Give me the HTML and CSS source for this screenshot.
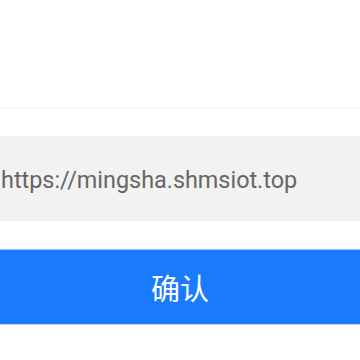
FILE: index.html
```html
<!DOCTYPE html>
<html lang="zh-CN">
<head>
    <meta charset="UTF-8">
    <meta name="viewport" content="width=device-width, initial-scale=1.0">
    <title>服务器地址</title>
    <link rel="stylesheet" href="styles.css">
</head>
<body>
    <div class="page">
        <div class="header"></div>
        <div class="form">
            <input class="address" type="text" value="https://mingsha.shmsiot.top">
            <button class="confirm">确认</button>
        </div>
    </div>
</body>
</html>
```
FILE: styles.css
```css
* {
    box-sizing: border-box;
    margin: 0;
    padding: 0;
}

body {
    font-family: Roboto, "Noto Sans CJK SC", sans-serif;
    background-color: #ffffff;
    width: 360px;
    height: 360px;
    overflow: hidden;
}

.header {
    height: 109px;
    border-bottom: 2px solid #f6f6f6;
}

.form {
    display: flex;
    flex-direction: column;
    padding-top: 27px;
}

.address {
    height: 85px;
    border: none;
    outline: none;
    background: #f2f2f2;
    color: #666666;
    font-family: Roboto, sans-serif;
    font-size: 23.4px;
    padding: 2px 0 0 1px;
}

.confirm {
    margin-top: 28px;
    height: 76px;
    border: none;
    border-top: 1px solid #9cc6ff;
    border-bottom: 1px solid #b8d6ff;
    background: #1a7bff;
    color: #ffffff;
    font-family: "Noto Sans CJK SC", sans-serif;
    font-size: 29px;
}
```
